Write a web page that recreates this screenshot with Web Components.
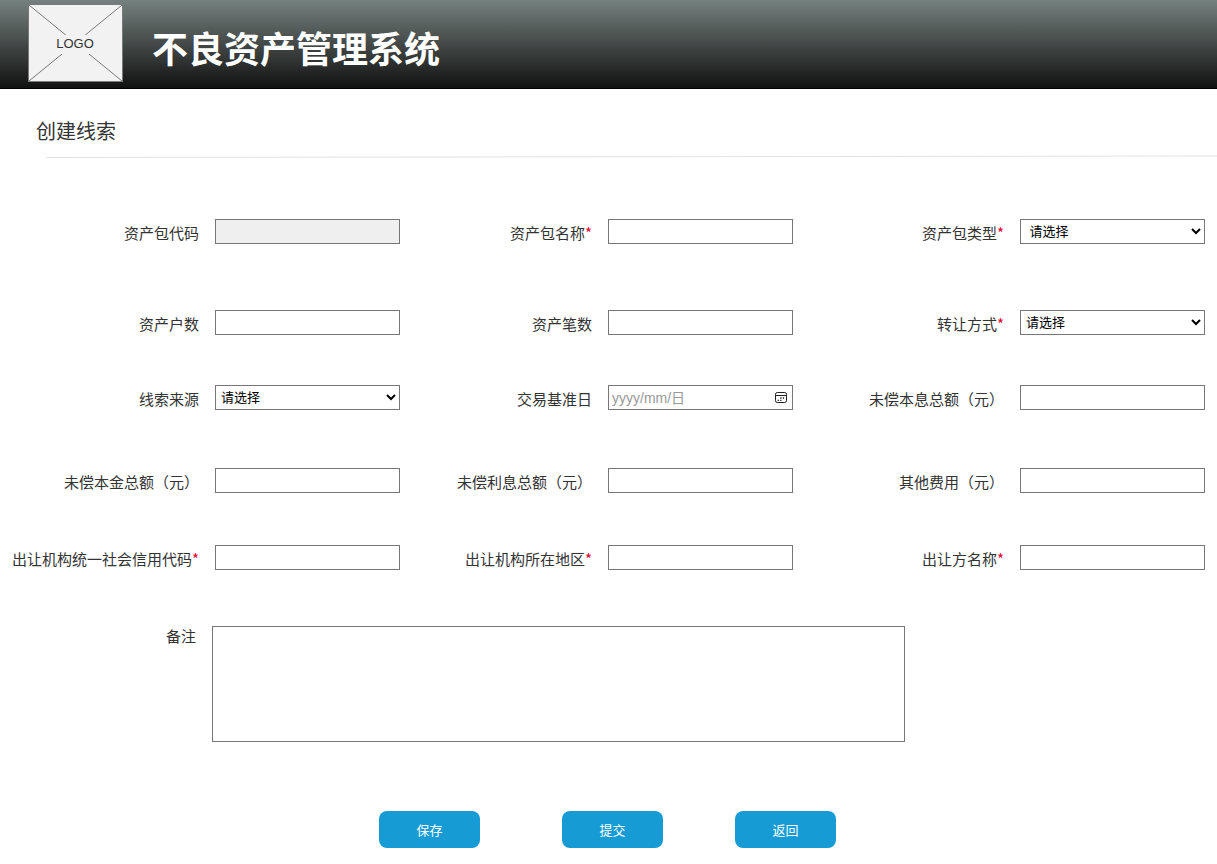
<!DOCTYPE html>
<html lang="zh-CN">
<head>
<meta charset="utf-8">
<meta name="viewport" content="width=device-width, initial-scale=1">
<title>不良资产管理系统</title>
<style>
  body {
    margin: 0;
    background: #fff;
    color: #333;
    font-family: "Liberation Sans", "Noto Sans CJK SC", sans-serif;
    --border: #767676;
    --brand: #169bd5;
    --required: #e6002d;
  }
</style>
</head>
<body>
<app-header>不良资产管理系统</app-header>
<main>
  <page-title>创建线索</page-title>
  <clue-form></clue-form>
</main>

<script>
  const define = (name, html, setup) => {
    const template = document.createElement('template');
    template.innerHTML = html;
    customElements.define(name, class extends HTMLElement {
      constructor() {
        super();
        this.attachShadow({ mode: 'open' }).append(template.content.cloneNode(true));
      }
      connectedCallback() {
        if (setup && !this.ready) {
          this.ready = true;
          setup(this, this.shadowRoot);
        }
      }
    });
  };

  define('app-logo', `
    <style>
      :host { display: block; width: 95px; height: 78px; }
      svg { display: block; }
      text { font-size: 13px; fill: #333; }
    </style>
    <svg width="95" height="78" viewBox="0 0 95 78" role="img" aria-label="LOGO">
      <rect x=".5" y=".5" width="94" height="77" fill="#f2f2f2" stroke="#797979"/>
      <path d="M1 1 94 77M94 1 1 77" stroke="#797979"/>
      <rect x="24" y="31" width="46" height="19" fill="#f2f2f2"/>
      <text x="47" y="44" text-anchor="middle">LOGO</text>
    </svg>`);

  define('app-header', `
    <style>
      :host {
        display: flex; align-items: flex-start; gap: 29px;
        box-sizing: border-box; min-height: 89px; padding: 4px 28px;
        background: linear-gradient(#75817e, #111);
        border-bottom: 1px solid #000;
      }
      h1 { margin: 0; padding-top: 22px; font-size: 36px; line-height: 50px; font-weight: 700; color: #fff; }
    </style>
    <app-logo></app-logo>
    <h1><slot></slot></h1>`);

  define('page-title', `
    <style>
      :host { display: block; padding-top: 28px; }
      h2 { margin: 0; padding-left: 36px; font-size: 20px; line-height: 30px; font-weight: 400; }
      .rule { padding: 8px 0 0 46px; }
      svg { display: block; width: 100%; height: 3px; }
    </style>
    <h2><slot></slot></h2>
    <div class="rule">
      <svg viewBox="0 0 100 3" preserveAspectRatio="none" aria-hidden="true">
        <path d="M0 2.5 100 1" stroke="#e2e2e2" vector-effect="non-scaling-stroke"/>
      </svg>
    </div>`);

  define('form-field', `
    <style>
      :host { display: grid; grid-template-columns: 1fr 185px; column-gap: 16px; align-items: start; }
      label { padding-top: 2px; text-align: right; white-space: nowrap; font-size: 15px; line-height: 25px; }
      .star { color: var(--required); font-family: "Noto Sans CJK SC", sans-serif; line-height: 1; }
      input, select {
        box-sizing: border-box; width: 100%; height: 25px; margin: 0;
        border: 1px solid var(--border); border-radius: 0; background: #fff;
        font-family: inherit; font-size: 13px; color: #000;
      }
      input { padding: 1px 3px; }
      select { padding: 0 2px 0 1px; }
      input:disabled { background: #efefef; }
      input.date { font-size: 14px; }
      input::placeholder { color: #999; opacity: 1; }
      .control { display: flex; position: relative; }
      .pick {
        position: absolute; right: 5px; top: 5px; width: 15px; height: 15px;
        padding: 0; border: 0; background: none;
      }
      .pick svg { display: block; }
    </style>
    <label for="c"></label>
    <div class="control"></div>`, (host, root) => {
      const label = root.querySelector('label');
      const box = root.querySelector('.control');
      const type = host.getAttribute('type') || 'text';
      label.textContent = host.getAttribute('label');
      if (host.hasAttribute('required')) {
        label.insertAdjacentHTML('beforeend', '<span class="star">*</span>');
      }
      if (type === 'select') {
        box.innerHTML = '<select id="c"><option></option></select>';
        box.querySelector('option').textContent = host.getAttribute('option');
      } else {
        box.innerHTML = '<input id="c" type="text">';
        const input = box.querySelector('input');
        input.disabled = host.hasAttribute('disabled');
        if (type === 'date') {
          input.className = 'date';
          input.placeholder = 'yyyy/mm/日';
          box.insertAdjacentHTML('beforeend', `
            <button class="pick" type="button" aria-label="选择日期">
              <svg width="15" height="15" viewBox="0 0 15 15" fill="none" stroke="#222">
                <rect x="2.5" y="2.5" width="11" height="10" rx="1.8"/>
                <path d="M2.5 5.5H13.5"/>
                <path d="M7.2 8h1.3M9.8 8h1.3M4.6 10.3h1.3M7.2 10.3h1.3" stroke-width="1.3"/>
              </svg>
            </button>`);
        }
      }
    });

  define('form-note', `
    <style>
      :host { display: grid; grid-template-columns: 212fr 693fr 300fr; align-items: start; }
      label { padding-right: 16px; text-align: right; font-size: 15px; line-height: 21px; }
      textarea {
        display: block; box-sizing: border-box; width: 100%; height: 116px; margin: 0; padding: 2px;
        border: 1px solid var(--border); border-radius: 0; resize: none;
        font-family: inherit; font-size: 13px;
      }
    </style>
    <label for="note"><slot></slot></label>
    <textarea id="note"></textarea>`);

  define('action-button', `
    <style>
      :host { display: block; width: 101px; }
      button {
        display: block; width: 100%; height: 37px; padding: 0; border: 0; border-radius: 8px;
        background: var(--brand); color: #fff; font-family: inherit; font-size: 13px; cursor: pointer;
      }
    </style>
    <button type="button"><slot></slot></button>`);

  define('clue-form', `
    <style>
      :host { display: block; padding: 61px 12px 16px 0; }
      .fields {
        display: grid;
        grid-template-columns: 400fr 393fr 412fr;
        grid-template-rows: 91px 75px 83px 77px 81px;
      }
      .actions {
        display: grid; grid-template-columns: 183px 173px 101px; justify-content: center;
        padding: 69px 0 0 10px;
      }
    </style>
    <form>
      <div class="fields">
        <form-field label="资产包代码" disabled></form-field>
        <form-field label="资产包名称" required></form-field>
        <form-field label="资产包类型" required type="select" option="&nbsp;请选择"></form-field>
        <form-field label="资产户数"></form-field>
        <form-field label="资产笔数"></form-field>
        <form-field label="转让方式" required type="select" option="请选择"></form-field>
        <form-field label="线索来源" type="select" option="请选择"></form-field>
        <form-field label="交易基准日" type="date"></form-field>
        <form-field label="未偿本息总额（元）"></form-field>
        <form-field label="未偿本金总额（元）"></form-field>
        <form-field label="未偿利息总额（元）"></form-field>
        <form-field label="其他费用（元）"></form-field>
        <form-field label="出让机构统一社会信用代码" required></form-field>
        <form-field label="出让机构所在地区" required></form-field>
        <form-field label="出让方名称" required></form-field>
      </div>
      <form-note>备注</form-note>
      <div class="actions">
        <action-button>保存</action-button>
        <action-button>提交</action-button>
        <action-button>返回</action-button>
      </div>
    </form>`);
</script>
</body>
</html>
